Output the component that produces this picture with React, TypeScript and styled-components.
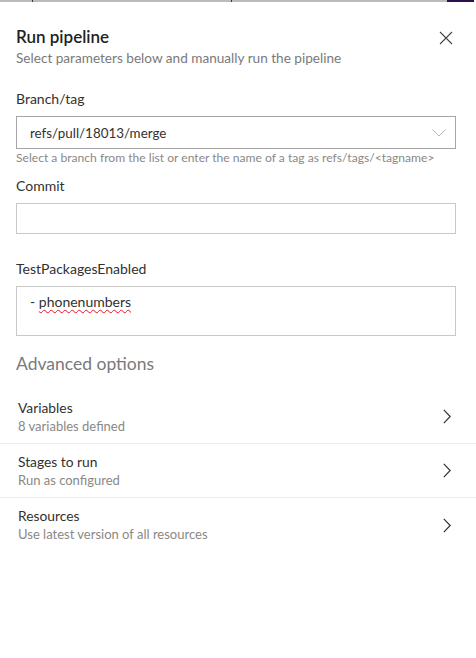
import * as React from 'react';
import styled, { createGlobalStyle } from 'styled-components';

const GlobalStyle = createGlobalStyle`
  html, body {
    margin: 0;
    padding: 0;
    background: #ffffff;
  }
  body {
    font-family: Lato, 'Open Sans', sans-serif;
    color: #323130;
  }
  * {
    box-sizing: border-box;
  }
`;

const Page = styled.div`
  width: 476px;
  height: 658px;
  display: flex;
  flex-direction: column;
  background: #ffffff;
  overflow: hidden;
`;

const Backdrop = styled.div`
  display: flex;
  height: 2px;
  flex-shrink: 0;
`;

const Strip = styled.div<{ $w?: number; $color: string }>`
  height: 100%;
  width: ${(p) => (p.$w ? `${p.$w}px` : 'auto')};
  flex: ${(p) => (p.$w ? '0 0 auto' : '1 1 auto')};
  background: ${(p) => p.$color};
`;

const Panel = styled.div`
  flex: 1;
  display: flex;
  flex-direction: column;
`;

const Header = styled.div`
  display: flex;
  justify-content: space-between;
  align-items: flex-start;
  padding: 23px 22px 0 16px;
`;

const Titles = styled.div`
  display: flex;
  flex-direction: column;
`;

const Title = styled.div`
  font-size: 17px;
  font-weight: 600;
  line-height: 24px;
  color: #201f1e;
`;

const Subtitle = styled.div`
  font-size: 13.6px;
  line-height: 20px;
  color: #7a7a7a;
  margin-top: -1px;
  margin-bottom: 2px;
`;

const CloseButton = styled.button`
  border: none;
  background: none;
  padding: 0;
  margin-top: 5px;
  width: 16px;
  height: 16px;
  display: flex;
  align-items: center;
  justify-content: center;
  cursor: pointer;
`;

const Form = styled.div`
  display: flex;
  flex-direction: column;
  padding: 0 20px 0 16px;
  margin-top: 19px;
`;

const Field = styled.div`
  display: flex;
  flex-direction: column;
`;

const Label = styled.div<{ $top?: number }>`
  font-size: 14px;
  line-height: 20px;
  color: #323130;
  margin-top: ${(p) => p.$top ?? 0}px;
  margin-bottom: 7px;
`;

const Box = styled.div<{ $height: number; $border: string }>`
  height: ${(p) => p.$height}px;
  border: 1px solid ${(p) => p.$border};
  display: flex;
  align-items: flex-start;
  justify-content: space-between;
  padding: 0 9px 0 13px;
  font-size: 14px;
  color: #323130;
`;

const BoxText = styled.span<{ $top: number; $size?: number }>`
  line-height: 20px;
  font-size: ${(p) => p.$size ?? 14}px;
  margin-top: ${(p) => p.$top}px;
`;

const Squiggle = styled.span`
  text-decoration: underline wavy #e81123;
  text-decoration-thickness: 1px;
  text-underline-offset: 2px;
`;

const Help = styled.div`
  font-size: 12.1px;
  line-height: 16px;
  color: #8a8886;
  margin-top: 1px;
`;

const Section = styled.div`
  font-size: 17.5px;
  line-height: 24px;
  color: #7a7a7a;
  padding: 0 16px;
  margin-top: 16px;
  margin-bottom: 14px;
`;

const List = styled.div`
  display: flex;
  flex-direction: column;
`;

const Row = styled.div<{ $last?: boolean }>`
  height: 54px;
  display: flex;
  align-items: center;
  justify-content: space-between;
  padding: 0 25px 0 18px;
  border-bottom: ${(p) => (p.$last ? 'none' : '1px solid #ebebeb')};
`;

const RowText = styled.div`
  display: flex;
  flex-direction: column;
`;

const RowTitle = styled.div`
  font-size: 13.8px;
  line-height: 18px;
  color: #323130;
`;

const RowSub = styled.div`
  font-size: 13px;
  line-height: 18px;
  color: #8a8886;
`;

const Icon = styled.svg`
  display: block;
  flex-shrink: 0;
`;

const CloseIcon = () => (
  <Icon width="14" height="14" viewBox="0 0 14 14">
    <path d="M1 1 L13 13 M13 1 L1 13" stroke="#444" strokeWidth="1.1" fill="none" />
  </Icon>
);

const DownIcon = styled(Icon)`
  margin-top: 12px;
`;

const ChevronDown = () => (
  <DownIcon width="14" height="8" viewBox="0 0 14 8">
    <path d="M0.5 0.5 L7 7 L13.5 0.5" stroke="#b0aeac" strokeWidth="0.9" fill="none" />
  </DownIcon>
);

const ChevronRight = () => (
  <Icon width="8" height="15" viewBox="0 0 8 15">
    <path d="M0.8 0.8 L7.2 7.5 L0.8 14.2" stroke="#323130" strokeWidth="1.2" fill="none" />
  </Icon>
);

const options = [
  { title: 'Variables', sub: '8 variables defined' },
  { title: 'Stages to run', sub: 'Run as configured' },
  { title: 'Resources', sub: 'Use latest version of all resources' },
];

const App = (): JSX.Element => {
  return (
    <Page>
      <GlobalStyle />
      <Backdrop>
        <Strip $w={32} $color="#bcbcbc" />
        <Strip $w={1} $color="#3a3a3a" />
        <Strip $w={198} $color="#bcbcbc" />
        <Strip $w={1} $color="#3a3a3a" />
        <Strip $w={215} $color="#bcbcbc" />
        <Strip $w={27} $color="#2b0f4a" />
        <Strip $color="#ffffff" />
      </Backdrop>
      <Panel>
        <Header>
          <Titles>
            <Title>Run pipeline</Title>
            <Subtitle>Select parameters below and manually run the pipeline</Subtitle>
          </Titles>
          <CloseButton aria-label="Close">
            <CloseIcon />
          </CloseButton>
        </Header>
        <Form>
          <Field>
            <Label>Branch/tag</Label>
            <Box $height={33} $border="#a6a6a6">
              <BoxText $top={6} $size={13.4}>refs/pull/18013/merge</BoxText>
              <ChevronDown />
            </Box>
            <Help>Select a branch from the list or enter the name of a tag as refs/tags/&lt;tagname&gt;</Help>
          </Field>
          <Field>
            <Label $top={10}>Commit</Label>
            <Box $height={31} $border="#c8c8c8" />
          </Field>
          <Field>
            <Label $top={25}>TestPackagesEnabled</Label>
            <Box $height={50} $border="#c8c8c8">
              <BoxText $top={5}>
                - <Squiggle>phonenumbers</Squiggle>
              </BoxText>
            </Box>
          </Field>
        </Form>
        <Section>Advanced options</Section>
        <List>
          {options.map((o, i) => (
            <Row key={o.title} $last={i === options.length - 1}>
              <RowText>
                <RowTitle>{o.title}</RowTitle>
                <RowSub>{o.sub}</RowSub>
              </RowText>
              <ChevronRight />
            </Row>
          ))}
        </List>
      </Panel>
    </Page>
  );
};

export default App;
